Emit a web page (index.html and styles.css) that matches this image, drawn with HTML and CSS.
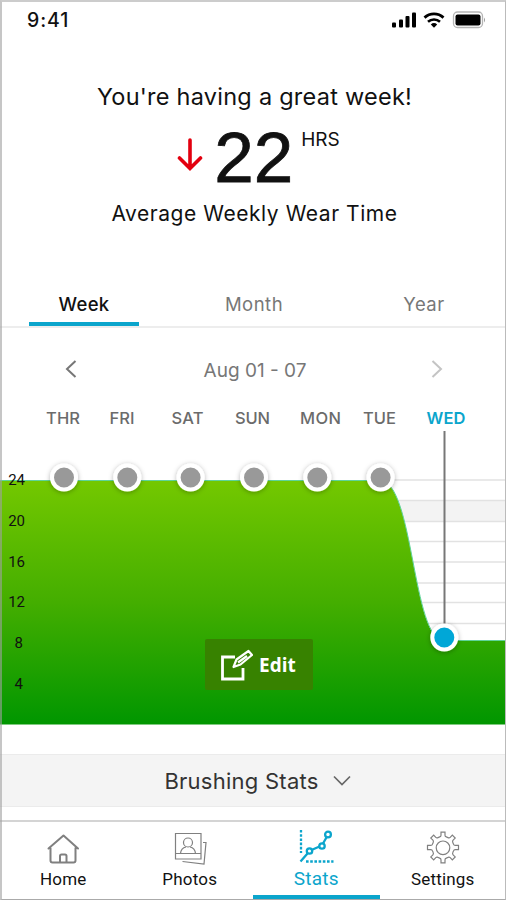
FILE: index.html
```html
<!DOCTYPE html>
<html lang="en">
<head>
    <meta charset="UTF-8">
    <meta name="viewport" content="width=device-width, initial-scale=1.0">
    <title>Stats - Wear Time</title>
    <link rel="stylesheet" href="styles.css">
</head>
<body>
    <div class="screen">
        <header class="status-bar">
            <span class="time">9:41</span>
            <svg class="status-icons" width="96" height="20" viewBox="0 0 96 20">
                <rect x="2" y="12.5" width="4" height="5" rx="1"/>
                <rect x="9" y="9.5" width="4" height="8" rx="1"/>
                <rect x="15.5" y="6" width="4" height="11.5" rx="1"/>
                <rect x="22" y="2.5" width="4" height="15" rx="1"/>
                <path d="M34.5 7.6a14 14 0 0 1 19 0" fill="none" stroke="#000" stroke-width="2.8"/>
                <path d="M38 11.8a9 9 0 0 1 12 0" fill="none" stroke="#000" stroke-width="2.6"/>
                <path d="M40.8 14.4a5 5 0 0 1 6.4 0L44 17.8z"/>
                <rect x="63.5" y="2" width="29" height="15.5" rx="4" fill="none" stroke="#b5b5b5" stroke-width="1.3"/>
                <rect x="65.5" y="4.5" width="25" height="11" rx="2"/>
                <path d="M94 7.5q2 2.5 0 5z" fill="#999"/>
            </svg>
        </header>

        <section class="summary">
            <h1>You're having a great week!</h1>
            <div class="hours">
                <svg class="arrow-down" width="26" height="34" viewBox="0 0 26 34">
                    <path d="M13 2v28M2.500 20L13 30.500 23.500 20"/>
                </svg>
                <span class="value">22</span>
                <span class="unit">HRS</span>
            </div>
            <p>Average Weekly Wear Time</p>
        </section>

        <nav class="tabs">
            <a class="tab active">Week</a>
            <a class="tab">Month</a>
            <a class="tab">Year</a>
        </nav>

        <div class="date-nav">
            <svg width="12" height="20" viewBox="0 0 12 20"><path d="M10.500 2L2 10l8.500 8"/></svg>
            <span>Aug 01 - 07</span>
            <svg class="next" width="12" height="20" viewBox="0 0 12 20"><path d="M1.500 2L10 10l-8.500 8"/></svg>
        </div>

        <div class="chart">
            <svg width="506" height="330" viewBox="0 400 506 330">
                <defs>
                    <linearGradient id="wear" x1="0" y1="480" x2="0" y2="725" gradientUnits="userSpaceOnUse">
                        <stop offset="0" stop-color="#74c800"/>
                        <stop offset="0.5" stop-color="#44ae00"/>
                        <stop offset="1" stop-color="#009600"/>
                    </linearGradient>
                    <filter id="shadow" x="-50%" y="-50%" width="200%" height="200%">
                        <feDropShadow dx="0" dy="1" stdDeviation="2.500" flood-opacity="0.3"/>
                    </filter>
                </defs>

                <!-- grid -->
                <rect x="380" y="500" width="126" height="21.500" fill="#f3f3f3"/>
                <path class="grid" d="M380 480H506M380 500.500H506M380 521.500H506M380 541.500H506M380 562H506M380 583H506M380 602.500H506M380 623.500H506"/>

                <!-- wear time area -->
                <path d="M0 480.500H380C414 480.500 412 640.500 444 640.500H506V724.500H0Z" fill="url(#wear)"/>
                <path d="M0 480.500H380C414 480.500 412 640.500 444 640.500H506" fill="none" stroke="#5fd39a" stroke-width="1"/>

                <path d="M444.500 431V628" stroke="#777" stroke-width="2"/>

                <!-- days -->
                <g class="days">
                    <text x="63" y="424" textLength="34">THR</text>
                    <text x="122" y="424" textLength="25">FRI</text>
                    <text x="187.500" y="424" textLength="32">SAT</text>
                    <text x="252.500" y="424" textLength="35">SUN</text>
                    <text x="320.500" y="424" textLength="41">MON</text>
                    <text x="379.500" y="424" textLength="33">TUE</text>
                    <text class="today" x="446" y="424" textLength="39">WED</text>
                </g>

                <!-- hours -->
                <g class="axis">
                    <text x="25" y="484.500">24</text>
                    <text x="25" y="525.500">20</text>
                    <text x="25" y="566.500">16</text>
                    <text x="25" y="607">12</text>
                    <text x="23" y="648">8</text>
                    <text x="23" y="689">4</text>
                </g>

                <g class="dots">
                    <circle cx="64" cy="477.500" r="12"/>
                    <circle cx="127.300" cy="477.500" r="12"/>
                    <circle cx="190.600" cy="477.500" r="12"/>
                    <circle cx="254" cy="477.500" r="12"/>
                    <circle cx="317.300" cy="477.500" r="12"/>
                    <circle cx="380.600" cy="477.500" r="12"/>
                    <circle class="today" cx="444.300" cy="637.500" r="12"/>
                </g>
            </svg>
            <button class="edit-button">
                <svg width="34" height="34" viewBox="0 0 34 34">
                    <path d="M16 9H3.500v22H24V20"/>
                    <path class="pencil" d="M14.500 19l3-7.500L29.500 3l3.500 4-11.500 9.500zM19 14.500l9-6.500"/>
                </svg>
                <span>Edit</span>
            </button>
        </div>

        <div class="brushing">
            <span>Brushing Stats</span>
            <svg width="18" height="12" viewBox="0 0 18 12"><path d="M1 1.500L9 9.500l8-8"/></svg>
        </div>

        <nav class="bottom-nav">
            <a class="nav-item">
                <svg class="home" width="34" height="38" viewBox="0 0 34 38">
                    <path d="M4.500 18v12.500q0 2 2 2h21q2 0 2-2V18M2.500 18.500L17.500 5.500 32 18.500M14 32v-6q0-1.500 1.500-1.500h3.500q1.500 0 1.500 1.500v6"/>
                </svg>
                <span>Home</span>
            </a>
            <a class="nav-item">
                <svg class="thin" width="34" height="38" viewBox="0 0 34 38">
                    <path d="M2.500 3.500h25.500v25.500H2.500zM2.500 23.500h25.500M7.500 23.500q.5-5.500 5.500-6.500M22.500 23.500q-.5-5.500-5.500-6.500M30 12.500h3l-2 21.500-21.500-2.500"/>
                    <circle cx="15" cy="12.500" r="4.500"/>
                </svg>
                <span>Photos</span>
            </a>
            <a class="nav-item active">
                <svg width="36" height="38" viewBox="0 0 36 38">
                    <path class="axes" d="M3 0V23M8 31.500h27.500"/>
                    <path d="M2.500 31.500l7-8M13.500 20l8-3.500M25 13.500l4-7"/>
                    <circle cx="11.500" cy="21" r="2.700"/>
                    <circle cx="24" cy="16" r="2.700"/>
                    <circle cx="30" cy="4.500" r="2.900"/>
                </svg>
                <span>Stats</span>
            </a>
            <a class="nav-item">
                <svg class="thin gear" width="36" height="38" viewBox="0 0 36 38">
                    <path d="M16 2.200h4v3q0 1.300 1.300 1.700l1.700.7q1.300.6 2.200-.3l2.100-2.100 2.900 2.900-2.100 2.100q-.9.900-.3 2.200l.7 1.700q.4 1.300 1.700 1.300h3.300v4.200h-3.300q-1.300 0-1.700 1.300l-.7 1.700q-.6 1.300.3 2.200l2.100 2.100-2.900 2.900-2.100-2.100q-.9-.9-2.200-.3l-1.700.7q-1.300.4-1.300 1.700v3h-4v-3q0-1.300-1.300-1.700l-1.700-.7q-1.300-.6-2.200.3l-2.100 2.100-2.900-2.900 2.100-2.100q.9-.9.300-2.200l-.7-1.700q-.4-1.300-1.700-1.300H2.500v-4.200h3.300q1.300 0 1.700-1.300l.7-1.700q.6-1.300-.3-2.200L5.800 8.100l2.900-2.900 2.100 2.100q.9.900 2.200.3l1.700-.7Q16 6.500 16 5.200z"/>
                    <circle cx="18" cy="17.800" r="6.800"/>
                </svg>
                <span>Settings</span>
            </a>
        </nav>
    </div>
</body>
</html>
```

FILE: styles.css
```css
* {
    margin: 0;
    padding: 0;
    box-sizing: border-box;
}

body {
    font-family: 'Inter', 'Liberation Sans', sans-serif;
    background: white;
    color: #111;
}

svg {
    display: block;
    flex: none;
}

.screen {
    position: relative;
    width: 506px;
    height: 900px;
    overflow: hidden;
}

/* thin frame over everything, the chart included */
.screen::after {
    content: "";
    position: absolute;
    inset: 0;
    border: 1px solid #bbb;
    border-width: 2px 1px 1px 2px;
    border-color: #ccc #bbb #aaa rgba(160, 160, 160, 0.6);
    pointer-events: none;
}

.status-bar {
    display: flex;
    align-items: center;
    justify-content: space-between;
    height: 40px;
    padding: 0 20px 0 27px;
}

.time {
    font-size: 19.5px;
    font-weight: 500;
    letter-spacing: 0.9px;
}

.summary {
    height: 240px;
    padding-top: 41px;
    text-align: center;
}

h1 {
    font-size: 23.5px;
    font-weight: 400;
    line-height: 32px;
    letter-spacing: 0.25px;
    padding-left: 3px;
}

.hours {
    display: flex;
    justify-content: center;
    height: 85px;
    padding-left: 11px;
}

.arrow-down {
    margin: 25px 11px 0 0;
    fill: none;
    stroke: #e3000f;
    stroke-width: 3.6;
    stroke-linecap: round;
}

.value {
    font-family: 'Liberation Sans', sans-serif;
    font-size: 71px;
    line-height: 89px;
    -webkit-text-stroke: 0.8px #111;
}

.unit {
    margin-left: 8px;
    padding-top: 15px;
    font-size: 19px;
    line-height: 24px;
}

.summary p {
    padding-left: 3px;
    font-size: 21px;
    line-height: 32px;
    letter-spacing: 0.55px;
}

.tabs {
    display: flex;
    justify-content: space-between;
    height: 48px;
    padding: 0 27px 0 29px;
    border-bottom: 2px solid #ededed;
}

.tab {
    width: 110px;
    height: 46px;
    font-size: 18.5px;
    line-height: 49px;
    letter-spacing: 0.5px;
    text-align: center;
    color: #777;
}

.tab.active {
    border-bottom: 4px solid #0ba5cc;
    font-weight: 500;
    letter-spacing: 0.3px;
    color: #111;
}

.date-nav {
    display: flex;
    align-items: center;
    justify-content: space-between;
    height: 72px;
    padding: 10px 63px 0 65px;
    font-size: 19px;
    color: #777;
}

.date-nav span {
    padding: 2px 0 0 2px;
}

.date-nav svg {
    fill: none;
    stroke: #777;
    stroke-width: 2;
}

.date-nav .next {
    stroke: #c4c4c4;
}

.chart {
    position: relative;
    height: 354px;
}

.grid {
    stroke: #e2e2e2;
    stroke-width: 1.5;
}

.days {
    font-size: 16.5px;
    font-weight: 500;
    text-anchor: middle;
    fill: #6b6b6b;
}

.days .today {
    font-weight: 600;
    fill: #0ba5cc;
}

.axis {
    font-family: 'Roboto', sans-serif;
    font-size: 15px;
    text-anchor: end;
    fill: #111;
}

.dots circle {
    fill: #999;
    stroke: white;
    stroke-width: 4;
    filter: url(#shadow);
}

.dots .today {
    fill: #00a7d7;
}

.edit-button {
    position: absolute;
    left: 205px;
    top: 239px;
    display: flex;
    align-items: center;
    gap: 6px;
    width: 108px;
    height: 51px;
    padding-left: 14px;
    border: none;
    border-radius: 2px;
    background: #378200;
    color: white;
    font-family: 'Open Sans', sans-serif;
    font-size: 19px;
    font-weight: 700;
}

.edit-button svg {
    fill: none;
    stroke: white;
    stroke-width: 2.8;
}

.edit-button .pencil {
    stroke-width: 2.2;
    stroke-linejoin: round;
}

.brushing {
    display: flex;
    align-items: center;
    justify-content: center;
    gap: 14px;
    height: 53px;
    padding-left: 9px;
    border: 1px solid #ebebeb;
    border-width: 1px 0;
    background: #f4f4f4;
    color: #333;
    font-size: 22px;
    letter-spacing: 0.25px;
}

.brushing svg {
    fill: none;
    stroke: #666;
    stroke-width: 1.7;
}

.bottom-nav {
    display: flex;
    height: 80px;
    margin-top: 13px;
    border-top: 2px solid #d4d4d4;
}

.nav-item {
    display: flex;
    flex: 1;
    flex-direction: column;
    align-items: center;
    padding-top: 8px;
    font-family: 'Roboto', sans-serif;
    font-size: 17px;
    line-height: 22px;
    letter-spacing: 0.2px;
}

.nav-item svg {
    fill: none;
    stroke: #808080;
    stroke-width: 1.2;
}

.nav-item svg.home {
    stroke-width: 2;
    stroke-linecap: round;
    stroke-linejoin: round;
}

.nav-item.active {
    border-bottom: 5px solid #0ba5cc;
    color: #0ba5cc;
    font-size: 19px;
}

.nav-item.active svg {
    stroke: #0ba5cc;
    stroke-width: 2.3;
}

.nav-item .axes {
    stroke-dasharray: 2.6 1.6;
}
```
